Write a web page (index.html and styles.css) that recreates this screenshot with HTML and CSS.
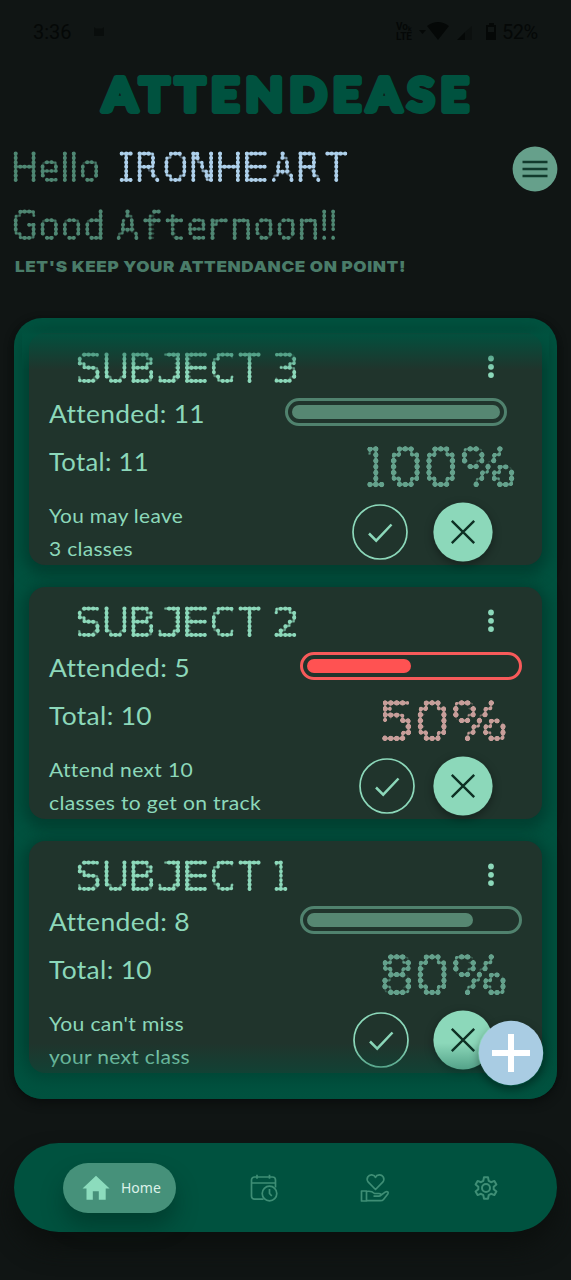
FILE: index.html
```html
<!DOCTYPE html>
<html lang="en">
<head>
<meta charset="utf-8">
<title>AttendEase</title>
<link rel="stylesheet" href="styles.css">
</head>
<body>
<svg class="defs" width="0" height="0">
  <filter id="dot-sm" x="0" y="0" width="1" height="1" color-interpolation-filters="sRGB">
    <feGaussianBlur stdDeviation="0.85"/>
    <feComponentTransfer><feFuncA type="linear" slope="8" intercept="-0.68"/></feComponentTransfer>
  </filter>
  <filter id="dot-lg" x="0" y="0" width="1" height="1" color-interpolation-filters="sRGB">
    <feGaussianBlur stdDeviation="1.05"/>
    <feComponentTransfer><feFuncA type="linear" slope="10" intercept="-0.8"/></feComponentTransfer>
  </filter>
  <symbol id="check" viewBox="0 0 58 58"><circle cx="28" cy="29" r="27" fill="none" stroke="currentColor" stroke-width="1.7"/><path d="M17 30.5l7.2 7.2L39.500 21.500" fill="none" stroke="currentColor" stroke-width="2.500"/></symbol>
  <symbol id="cross" viewBox="0 0 60 60"><circle cx="30" cy="30" r="29.600" fill="#8cd8ba"/><path d="M18.800 18.800l22.400 22.400M41.200 18.800L18.800 41.200" fill="none" stroke="#0e3024" stroke-width="2.400"/></symbol>
  <symbol id="more" viewBox="0 0 8 24"><circle cx="4" cy="3.500" r="2.900"/><circle cx="4" cy="11.800" r="2.900"/><circle cx="4" cy="20.100" r="2.900"/></symbol>
</svg>

<header class="status">
  <span class="clock">3:36</span>
  <svg class="face" width="14" height="14" viewBox="0 0 14 14"><path d="M2 2l2 1.500h6L12 2v9H2z"/></svg>
  <span class="volte">Vo&#8342;<br>LTE</span>
  <svg width="82" height="20" viewBox="0 0 82 20"><path d="M0 8h7l-3.500 4zM8 4q11-8 22 0L19 18zM38 18l8-8v8z"/><path d="M77 3h-2V1h-5v2h-3v15h10zM69 5h6v5h-6z" fill-rule="evenodd"/><path d="M46 18v-8l7-6v14z" opacity=".35"/></svg>
  <span class="battery">52%</span>
</header>

<svg class="brand" width="380" height="50" viewBox="0 0 380 50"><text x="7" y="41" textLength="372" lengthAdjust="spacingAndGlyphs">ATTENDEASE</text></svg>

<section class="hero">
  <div class="greeting">
    <div class="row"><span class="dots muted" data-dots>Hello</span><span class="dots name" data-dots>IRONHEART</span></div>
    <div class="row second"><span class="dots muted" data-dots>Good Afternoon!!</span></div>
  </div>
  <svg class="menu" width="46" height="46" viewBox="0 0 46 46"><circle cx="23" cy="23" r="22.400" fill="#66a08b"/><path d="M10.500 16h25M10.500 23h25M10.500 30h25" stroke="#123b2d" stroke-width="2.500"/></svg>
</section>
<svg class="tagline" width="400" height="20" viewBox="0 0 400 20"><text x="0" y="13" textLength="391" lengthAdjust="spacingAndGlyphs">LET'S KEEP YOUR ATTENDANCE ON POINT!</text></svg>

<main class="panel">
  <div class="list">
    <article class="card">
      <div class="top"><span class="dots title" data-dots>SUBJECT 3</span><svg class="more" width="8" height="24"><use href="#more"/></svg></div>
      <div class="body">
        <div class="info">
          <svg class="stat" width="220" height="48"><text x="0" y="34" textLength="156" lengthAdjust="spacingAndGlyphs">Attended: 11</text></svg>
          <svg class="stat" width="220" height="48"><text x="0" y="34" textLength="100" lengthAdjust="spacingAndGlyphs">Total: 11</text></svg>
          <div class="notes">
            <svg class="note" width="220" height="33"><text x="0" y="29.500" textLength="134" lengthAdjust="spacingAndGlyphs">You may leave</text></svg>
            <svg class="note" width="220" height="33"><text x="0" y="29.500" textLength="84" lengthAdjust="spacingAndGlyphs">3 classes</text></svg>
          </div>
        </div>
        <div class="meter">
          <div class="bar shifted"><i style="width:100%"></i></div>
          <span class="dots percent wide" data-dots="lg">100%</span>
          <div class="actions"><svg width="58" height="58"><use href="#check"/></svg><svg class="cross" width="60" height="60" style="margin-left:23px"><use href="#cross"/></svg></div>
        </div>
      </div>
    </article>

    <article class="card">
      <div class="top"><span class="dots title" data-dots>SUBJECT 2</span><svg class="more" width="8" height="24"><use href="#more"/></svg></div>
      <div class="body">
        <div class="info">
          <svg class="stat" width="220" height="48"><text x="0" y="34" textLength="141" lengthAdjust="spacingAndGlyphs">Attended: 5</text></svg>
          <svg class="stat" width="220" height="48"><text x="0" y="34" textLength="103" lengthAdjust="spacingAndGlyphs">Total: 10</text></svg>
          <div class="notes">
            <svg class="note" width="220" height="33"><text x="0" y="29.500" textLength="144" lengthAdjust="spacingAndGlyphs">Attend next 10</text></svg>
            <svg class="note" width="220" height="33"><text x="0" y="29.500" textLength="212" lengthAdjust="spacingAndGlyphs">classes to get on track</text></svg>
          </div>
        </div>
        <div class="meter">
          <div class="bar low"><i style="width:50%"></i></div>
          <span class="dots percent warn" data-dots="lg">50%</span>
          <div class="actions"><svg width="58" height="58"><use href="#check"/></svg><svg class="cross" width="60" height="60" style="margin-left:16px"><use href="#cross"/></svg></div>
        </div>
      </div>
    </article>

    <article class="card">
      <div class="top"><span class="dots title" data-dots>SUBJECT 1</span><svg class="more" width="8" height="24"><use href="#more"/></svg></div>
      <div class="body">
        <div class="info">
          <svg class="stat" width="220" height="48"><text x="0" y="34" textLength="141" lengthAdjust="spacingAndGlyphs">Attended: 8</text></svg>
          <svg class="stat" width="220" height="48"><text x="0" y="34" textLength="103" lengthAdjust="spacingAndGlyphs">Total: 10</text></svg>
          <div class="notes">
            <svg class="note" width="220" height="33"><text x="0" y="29.500" textLength="135" lengthAdjust="spacingAndGlyphs">You can't miss</text></svg>
            <svg class="note" width="220" height="33"><text x="0" y="29.500" textLength="141" lengthAdjust="spacingAndGlyphs">your next class</text></svg>
          </div>
        </div>
        <div class="meter">
          <div class="bar"><i style="width:80%"></i></div>
          <span class="dots percent" data-dots="lg">80%</span>
          <div class="actions"><svg width="58" height="58"><use href="#check"/></svg><svg class="cross" width="60" height="60" style="margin-left:22px"><use href="#cross"/></svg></div>
        </div>
      </div>
    </article>
  </div>
  <div class="fade fade-top"></div>
  <div class="fade fade-bottom"></div>
  <svg class="fab" width="66" height="66" viewBox="0 0 66 66"><circle cx="33" cy="33" r="32.200" fill="#a9cce3"/><path d="M14 33h38M33 14v38" stroke="#fff" stroke-width="6"/></svg>
</main>

<nav class="nav">
  <a class="home"><svg width="28" height="26" viewBox="0 0 28 26"><path d="M14 0.800L0.500 13.500h4V24.700h6.300v-8.500h6v8.500h6.900V13.500h3.900z" fill="#8cdcbd"/></svg><span>Home</span></a>
  <svg class="tab calendar" width="28" height="28" viewBox="0 0 28 28"><path d="M13.500 25.200H4.500a3 3 0 0 1-3-3V6a3 3 0 0 1 3-3h18a3 3 0 0 1 3 3v7.500M1.500 9h24M7 .8v4M19.500 .8v4"/><circle cx="19.500" cy="19.500" r="7.300"/><path d="M19.500 15v4.500l2.300 2.500"/></svg>
  <svg class="tab give" width="30" height="30" viewBox="0 0 30 30"><path d="M15.500 16.500L8.300 9.200C5.500 5.500 8.500 1.500 11.800 1.800 13.700 2 15 3.100 15.500 4.300 16 3.100 17.500 1.900 19.200 1.800 23 1.600 25.300 6 22.700 9.200zM1.500 18h5v10h-5zM6.500 18.500c4-.8 6.500.6 8 2h4.500c2.500 0 2.500 2.600 0 2.600h-5.500M20.500 22.500l5-3.600c2-1 3.400.4 2.300 2l-4.300 5.500c-.8 1-1.600 1.300-3 1.300h-14"/></svg>
  <svg class="tab gear" width="26" height="26" viewBox="0 0 26 26"><circle cx="13" cy="13" r="4"/><path d="M11 2.300h4l.7 3.600 2.300 1.300 3.400-1.300 2 3.500-2.700 2.300v2.600l2.700 2.300-2 3.500-3.400-1.300-2.300 1.300-.7 3.600h-4l-.7-3.600L8 18.800l-3.400 1.300-2-3.500 2.700-2.300v-2.600L2.600 9.400l2-3.500L8 7.200l2.300-1.300z"/></svg>
</nav>
<script src="dots.js"></script>
</body>
</html>
```

FILE: styles.css
```css
* { box-sizing: border-box; }
body {
  margin: 0;
  width: 571px;
  height: 1280px;
  overflow: hidden;
  background: #101514;
  font-family: Lato, "Open Sans", sans-serif;
  display: flex;
  flex-direction: column;
}
svg { display: block; flex: none; overflow: visible; }
.defs { position: absolute; }

/* status bar */
.status {
  height: 64px;
  flex: none;
  display: flex;
  align-items: center;
  padding: 0 33px;
  color: #050807;
  fill: #050807;
  font: 20px/20px Roboto, sans-serif;
}
.face { margin-left: 20px; opacity: .6; }
.volte { margin-left: auto; font: bold 10px/10px Roboto, sans-serif; padding-right: 7px; }
.battery { width: 36px; margin-left: 1px; letter-spacing: -.5px; }

.brand { margin: 6px 0 0 96px; }
.brand text {
  font: 700 45.500px Lato, sans-serif;
  letter-spacing: 6px;
  fill: #00523f;
  stroke: #00523f;
  stroke-width: 5.800px;
  stroke-linejoin: round;
}

/* greeting */
.hero { display: flex; justify-content: space-between; padding: 26.600px 13.500px 0 9.300px; }
.greeting { height: 101.800px; }
.row { display: flex; gap: 11.600px; }
.row.second { margin-top: 19px; }
.dots { display: block; filter: url(#dot-sm); }
.dots svg {
  --seed: radial-gradient(circle, #000 calc(var(--r) - .25px), transparent calc(var(--r) + .25px));
  -webkit-mask: var(--seed) 0 0 / var(--px) var(--py);
  mask: var(--seed) 0 0 / var(--px) var(--py);
}
.dots text { font-size: 100px; fill: currentColor; stroke: currentColor; stroke-width: 2px; }
.muted { color: #4f8773; }
.name { color: #aed0ea; }
.tagline { margin: 11px 0 0 14.500px; }
.tagline text { font: 900 15px Inter, sans-serif; letter-spacing: .5px; fill: #4a7c69; }
.menu { margin-top: -.600px; }

/* subject list */
.panel {
  position: relative;
  margin: 39px 14px 0;
  height: 781px;
  flex: none;
  padding: 15px;
  border-radius: 28px;
  background: #00523f;
  box-shadow: 0 4px 10px #0a0e0d;
}
.list { display: flex; flex-direction: column; gap: 22px; }
.card {
  height: 232px;
  border-radius: 16px;
  background: #20342c;
  box-shadow: 0 4px 14px 6px rgba(0, 44, 33, .5);
  color: #8cd8ba;
}
.top {
  height: 56px;
  padding: 15px 47px 0 44.300px;
  display: flex;
  justify-content: space-between;
}
.more { margin-top: 7px; fill: #8cd8ba; }
.body { display: flex; justify-content: space-between; padding-left: 20px; }
.stat text, .note text { fill: #8cd8ba; letter-spacing: .3px; font-variant-ligatures: none; }
.stat text { font-size: 24.500px; }
.note text { font-size: 20px; }
.notes { margin-top: 8px; }
.meter { display: flex; flex-direction: column; align-items: flex-end; }
.bar {
  width: 222px;
  height: 28px;
  margin: 9px 20px 0 0;
  padding: 4px;
  border: 3px solid #50826e;
  border-radius: 14px;
}
.bar.shifted { margin-right: 35px; }
.bar i { display: block; height: 14px; border-radius: 7px; background: #568772; }
.bar.low { border-color: #f75a5a; }
.bar.low i { background: #ff5252; }
.percent { margin: 13.600px 29.400px 0 0; color: #64a18c; filter: url(#dot-lg); }
.percent.wide { margin-right: 21px; }
.percent.warn { color: #c79e9a; }
.actions { display: flex; align-items: center; margin: 8.500px 49.500px 0 0; }
.cross { border-radius: 50%; box-shadow: 0 3px 8px rgba(0, 0, 0, .35); }

.fade { position: absolute; }
.fade-top { left: 8px; right: 8px; top: 9px; height: 43px; background: linear-gradient(rgba(0, 82, 63, 0), rgba(0, 82, 63, .9) 8px, rgba(0, 82, 63, 0)); }
.fade-bottom { left: 0; right: 0; bottom: 0; height: 56px; border-radius: 0 0 28px 28px; background: linear-gradient(rgba(0, 82, 63, 0), rgba(0, 82, 63, .85)); }
.fab {
  position: absolute;
  right: 13px;
  bottom: 13px;
  border-radius: 50%;
  box-shadow: 0 4px 9px rgba(0, 0, 0, .35);
}

/* bottom navigation */
.nav {
  margin: 44px 14px 0;
  height: 89px;
  flex: none;
  border-radius: 45px;
  background: #00523f;
  box-shadow: 0 16px 24px #0c100e;
  display: flex;
  align-items: center;
  padding-left: 49px;
}
.home {
  width: 113px;
  height: 50px;
  border-radius: 25px;
  background: #46917a;
  box-shadow: 0 14px 22px rgba(0, 35, 25, .4);
  display: flex;
  align-items: center;
  padding-left: 19px;
  gap: 11px;
  font: 14px "Noto Sans", sans-serif;
  color: #dcf1e9;
}
.tab { fill: none; stroke: #3e8e75; stroke-width: 1.700px; stroke-linejoin: round; }
.calendar { margin-left: 74px; }
.give { margin-left: 82px; }
.gear { margin-left: 83px; stroke-width: 2px; }
```

FILE: dots.js
```js
// Dot-matrix display: every letter is stretched to a whole number of dots.
const COLS = { I: 3, 1: 3, l: 1, '!': 1, '%': 9 };
const MONO = 'IJftr';
const pen = document.createElement('canvas').getContext('2d');

function cols(ch) {
  return COLS[ch] || (/[a-z]/.test(ch) ? 4 : 5);
}

function firstRow(ch) {
  if (ch === 't') return 1;
  return /[enor]/.test(ch) ? 2 : 0;
}

document.querySelectorAll('[data-dots]').forEach(el => {
  const large = el.dataset.dots === 'lg';
  const px = large ? 5.92 : 4.48;
  const py = large ? 5.93 : 4.4;
  let x = 0;
  let glyphs = '';
  for (const ch of el.textContent) {
    if (ch === ' ') { x += 2; glyphs += ' '; continue; }
    const n = cols(ch);
    const family = MONO.includes(ch) ? 'DejaVu Sans Mono' : 'DejaVu Sans';
    pen.font = `100px "${family}"`;
    const m = pen.measureText(ch);
    const top = firstRow(ch) - 0.4;
    const sx = (n - 0.2) / (m.actualBoundingBoxRight + m.actualBoundingBoxLeft);
    const sy = (6.4 - top) / (m.actualBoundingBoxAscent + m.actualBoundingBoxDescent);
    const tx = x - 0.4 + m.actualBoundingBoxLeft * sx;
    const ty = 6.4 - m.actualBoundingBoxDescent * sy;
    glyphs += `<text font-family="${family}" transform="translate(${tx} ${ty}) scale(${sx} ${sy})">${ch}</text>`;
    x += n + 1;
  }
  const w = x + 1;
  el.style.setProperty('--px', px + 'px');
  el.style.setProperty('--py', py + 'px');
  el.style.setProperty('--r', large ? '1.6px' : '1.13px');
  el.innerHTML = `<svg width="${w * px}" height="${9 * py}" viewBox="-1.5 -1.5 ${w} 9" preserveAspectRatio="none">${glyphs}</svg>`;
});
```
